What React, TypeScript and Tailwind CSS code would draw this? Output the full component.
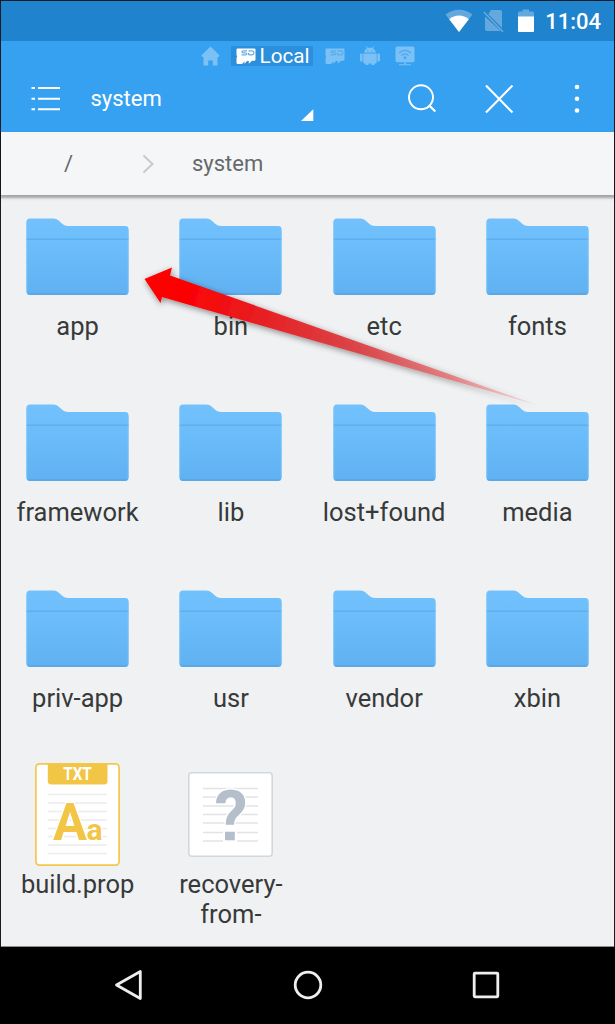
import type { ReactNode } from "react";

function Folder() {
  return (
    <svg width="103" height="78" viewBox="0 0 103 78">
      <defs>
        <linearGradient id="folderFill" x1="0" y1="0" x2="0" y2="1">
          <stop offset="0" stopColor="#72c1fd" />
          <stop offset="0.28" stopColor="#6dbefb" />
          <stop offset="1" stopColor="#60b1f1" />
        </linearGradient>
      </defs>
      <path
        d="M0.4 4Q0.4 0.5 4 0.5H27.500Q30.500 0.500 32.500 2.500L36.500 6Q38.500 8.100 42 8.100H99Q102.600 8.100 102.600 11.500V73.500Q102.600 77 99 77H4Q0.400 77 0.400 73.500Z"
        fill="url(#folderFill)"
      />
      <path d="M0.500 21.200H102.500" stroke="#5db0ed" strokeWidth="1.500" />
      <path d="M2.500 76H100.500" stroke="#559fd9" strokeWidth="1.200" />
      <path d="M0.800 4V74M102.200 12V74" stroke="#83c8fb" strokeWidth="0.700" />
    </svg>
  );
}

function TextFile() {
  return (
    <svg width="85" height="103" viewBox="0 0 85 103">
      <rect x="0.900" y="0.900" width="83.200" height="101.200" rx="3.500" fill="#fff" stroke="#f3c74e" strokeWidth="1.700" />
      <path d="M13 31.500H72M13 40H72M13 48.500H72M13 57H72M13 65.500H72M13 73.500H72M13 82H72M13 90.500H72" stroke="#ebecee" strokeWidth="1.400" />
      <path d="M12.800 1H72.500V18Q72.500 21.500 69 21.500H16.300Q12.800 21.500 12.800 18Z" fill="#f3c546" />
      <text x="42.500" y="17.300" textAnchor="middle" fontFamily="Roboto, sans-serif" fontWeight="700" fontSize="17.500" textLength="28.500" lengthAdjust="spacingAndGlyphs" fill="#fff">TXT</text>
      <g fontFamily="Roboto, sans-serif" fontWeight="700" fill="#f3c546" stroke="#fff" strokeWidth="3" paintOrder="stroke">
        <text x="18" y="76.500" fontSize="52" textLength="34" lengthAdjust="spacingAndGlyphs">A</text>
        <text x="51.500" y="76.500" fontSize="30">a</text>
      </g>
    </svg>
  );
}

function UnknownFile() {
  return (
    <svg width="85" height="85" viewBox="0 0 85 85">
      <rect x="0.800" y="0.800" width="83.400" height="83.400" rx="3" fill="#fff" stroke="#d3d8df" strokeWidth="1.600" />
      <path d="M15 16.500H70M15 25H70M15 34H70M15 42.500H70M15 51H70M15 60.500H70M15 69H70" stroke="#e2e3e5" strokeWidth="1.500" />
      <text x="26.500" y="67.500" fontFamily="Roboto, sans-serif" fontWeight="700" fontSize="71" textLength="33" lengthAdjust="spacingAndGlyphs" fill="#b5bfcc" stroke="#fff" strokeWidth="3" paintOrder="stroke">?</text>
      <path d="M35 57.500H49V70H35Z" fill="#fff" />
      <path d="M37 59.700H46.800V68.300H37Z" fill="#b5bfcc" />
    </svg>
  );
}

function SdCard({ cutout }: { cutout: string }) {
  return (
    <svg width="20" height="17" viewBox="0 0 20 17">
      <path d="M1.500 0.500H18.500Q19.500 0.500 19.500 1.500V11.500Q19.500 12.800 18.200 12.800H16L12.800 15.800V13H11L8.500 16V13.500L6 16H1.800Q0.500 16 0.500 14.800V10L1.200 8.500L0.500 7V1.500Q0.500 0.500 1.500 0.500Z" fill="currentColor" />
      <path d="M11 2.900H7.300Q5.800 2.900 5.800 3.900T7.300 4.900H9.500Q11 4.900 11 5.900T9.500 6.900H5.500M12.500 2.900H16Q18 2.900 18 4.900T16 6.900H12.700V5" fill="none" stroke={cutout} strokeWidth="1" />
    </svg>
  );
}

function StatusBar() {
  return (
    <div className="flex h-10 shrink-0 items-center justify-end bg-[#2083cd] pr-[13px]">
      <svg className="mr-[10px]" width="28" height="24" viewBox="0 0 28 24">
        <path d="M0.500 5.500C8.500 -0.800 19.500 -0.800 27.500 5.500L14 23Z" fill="#64a9dd" />
        <path d="M4.200 10.300C10 5.300 18 5.300 23.800 10.300L14 23Z" fill="#fff" />
      </svg>
      <svg className="mr-[14px]" width="21" height="24" viewBox="0 0 21 24">
        <path d="M8 1H17Q19 1 19 3V19L5.300 5.200ZM2.500 8L17.500 22H4Q2 22 2 20V8Z" fill="#64a9dd" />
        <path d="M0.800 3L20 22.800" stroke="#64a9dd" strokeWidth="1.700" />
      </svg>
      <svg className="mr-[11px]" width="16" height="24" viewBox="0 0 16 24">
        <path d="M0 4Q0 2.500 1.500 2.500H4.500V0.500H11V2.500H14.500Q16 2.500 16 4V8H0Z" fill="#64a9dd" />
        <path d="M0 7.500H16V22Q16 23 15 23H1Q0 23 0 22Z" fill="#fff" />
      </svg>
      <span className="pt-[2px] text-[22px] leading-[26px] font-medium text-white">11:04</span>
    </div>
  );
}

function StorageTabs() {
  return (
    <div className="flex h-5 items-center pl-[200px] text-[#7bc1f6]">
      <svg width="19" height="20" viewBox="0 0 19 20">
        <path d="M9.500 0.500L18.700 9.500L17.500 11H16.500V19.500H11.800V14.500H7.200V19.500H2.500V11H1.500L0.300 9.500Z" fill="currentColor" />
      </svg>
      <div className="ml-[11px] flex h-5 w-[82px] items-center bg-[#2b8fdb] pl-[5px] text-white">
        <SdCard cutout="#3897de" />
        <span className="ml-[3.500px] text-[20.700px] leading-5">Local</span>
      </div>
      <div className="ml-[12px] flex items-center gap-[15px]">
        <SdCard cutout="#4ea9ec" />
        <svg width="20" height="20" viewBox="0 0 20 20" fill="currentColor">
          <path d="M4 6.500Q4.500 3.500 7 2.200L6 0.700L6.700 0.300L7.900 1.900Q10 1.200 12.100 1.900L13.300 0.300L14 0.700L13 2.200Q15.500 3.500 16 6.500ZM3.300 7.500H16.700V16.500Q16.700 17.500 15.700 17.500H14.500V19H11.500V17.500H8.500V19H5.500V17.500H4.300Q3.300 17.500 3.300 16.500Z" />
          <rect x="0" y="7.500" width="2.600" height="8" rx="1.100" />
          <rect x="17.400" y="7.500" width="2.600" height="8" rx="1.100" />
          <path d="M7.300 4.500h.9M11.800 4.500h.9" stroke="#36a1f1" strokeWidth="1" />
        </svg>
        <svg width="20" height="20" viewBox="0 0 20 20">
          <path d="M2 0.500H18Q19.500 0.500 19.500 2V15Q19.500 16.300 18 16.300H10.700V18.200H16V19.300H4V18.200H9.300V16.300H2Q0.500 16.300 0.500 15V2Q0.500 0.500 2 0.500Z" fill="currentColor" />
          <path d="M4.200 7Q10 1.700 15.800 7M6.500 9.500Q10 6.300 13.500 9.500" fill="none" stroke="#45a7f2" strokeWidth="1.300" />
          <circle cx="10" cy="11.700" r="1.500" fill="#45a7f2" />
        </svg>
      </div>
    </div>
  );
}

function Toolbar() {
  return (
    <div className="flex h-[66px] items-center pl-[30px] text-white">
      <svg width="29" height="26" viewBox="0 0 29 26">
        <path d="M0.500 2H4M0.500 12.700H4M0.500 23.300H4M7 2H29M7 12.700H29M7 23.300H29" stroke="currentColor" strokeWidth="2" />
      </svg>
      <span className="ml-[30.500px] w-[209.500px] text-[22px] leading-[26px]">system</span>
      <svg className="mt-[32px]" width="14" height="13" viewBox="0 0 14 13">
        <path d="M1 12L13.300 0.200V12Z" fill="currentColor" />
      </svg>
      <svg className="ml-[93px]" width="30" height="30" viewBox="0 0 30 30" fill="none" stroke="currentColor">
        <circle cx="14" cy="13.300" r="12" strokeWidth="1.900" />
        <path d="M22 21.300L28.300 27.500" strokeWidth="2.200" />
      </svg>
      <svg className="ml-[48px]" width="29" height="29" viewBox="0 0 29 29">
        <path d="M1 0.500L27.500 27.500M27.500 0.500L1 27.500" fill="none" stroke="currentColor" strokeWidth="2.100" />
      </svg>
      <svg className="ml-[59px]" width="8" height="30" viewBox="0 0 8 30" fill="currentColor">
        <circle cx="4" cy="3" r="2.300" />
        <circle cx="4" cy="14.800" r="2.300" />
        <circle cx="4" cy="26.500" r="2.300" />
      </svg>
    </div>
  );
}

function Breadcrumbs() {
  return (
    <nav className="relative z-10 flex h-[63px] shrink-0 items-center bg-[#f5f6f8] text-[22px] leading-[26px] text-[#66686a] shadow-[0_2px_2px_1px_rgba(0,0,0,0.26),0_3px_5px_rgba(0,0,0,0.08)]">
      <span className="w-[141px] pl-[63px]">/</span>
      <svg width="12" height="20" viewBox="0 0 12 20">
        <path d="M1.500 1.500L10.500 10L1.500 18.500" fill="none" stroke="#c8c9cb" strokeWidth="2" />
      </svg>
      <span className="ml-[38px]">system</span>
    </nav>
  );
}

const folders = [
  "app", "bin", "etc", "fonts",
  "framework", "lib", "lost+found", "media",
  "priv-app", "usr", "vendor", "xbin",
];

function Item({ icon, children }: { icon: ReactNode; children: ReactNode }) {
  return (
    <div className="flex flex-col items-center">
      <div className="flex h-[103px] items-center">{icon}</div>
      <div className="mt-[3px] text-center text-[25.500px] leading-[30px] whitespace-nowrap text-[#373a39]">{children}</div>
    </div>
  );
}

function PointerArrow() {
  return (
    <svg className="pointer-events-none absolute top-[255px] left-[135px] z-20" width="415" height="165" viewBox="135 255 415 165">
      <defs>
        <linearGradient id="arrowFill" gradientUnits="userSpaceOnUse" x1="145" y1="279" x2="536" y2="405">
          <stop offset="0" stopColor="#ff0000" />
          <stop offset="0.110" stopColor="#fb0305" />
          <stop offset="0.300" stopColor="#e71d20" stopOpacity="0.980" />
          <stop offset="0.550" stopColor="#dc3e41" stopOpacity="0.920" />
          <stop offset="0.780" stopColor="#e26467" stopOpacity="0.750" />
          <stop offset="1" stopColor="#ee8c8e" stopOpacity="0.250" />
        </linearGradient>
        <filter id="arrowShadow" x="-10%" y="-20%" width="120%" height="150%">
          <feDropShadow dx="1" dy="2" stdDeviation="3.200" floodColor="#000" floodOpacity="0.450" />
        </filter>
      </defs>
      <path d="M144.500 279L172 267.500L170 275.500L537 405L162 297L160.500 303Z" fill="url(#arrowFill)" filter="url(#arrowShadow)" />
    </svg>
  );
}

function NavigationBar() {
  return (
    <div className="flex h-[77px] shrink-0 items-center justify-between bg-black pr-[115px] pb-[2px] pl-[114px]">
      <svg width="29" height="32" viewBox="0 0 29 32">
        <path d="M26.300 2.500V29.500L2.500 16Z" fill="none" stroke="#eee" strokeWidth="2.800" strokeLinejoin="round" />
      </svg>
      <svg width="30" height="30" viewBox="0 0 30 30">
        <circle cx="15" cy="15" r="12.800" fill="none" stroke="#eee" strokeWidth="2.800" />
      </svg>
      <svg width="28" height="28" viewBox="0 0 28 28">
        <rect x="2.200" y="2.200" width="23.600" height="23.600" rx="0.700" fill="none" stroke="#eee" strokeWidth="2.800" />
      </svg>
    </div>
  );
}

export default function App() {
  return (
    <div className="relative flex h-[1024px] w-[615px] flex-col overflow-hidden bg-[#171c22] font-[Roboto,sans-serif]">
      <div className="mx-px mt-px flex min-h-0 flex-1 flex-col">
        <StatusBar />
        <header className="h-[91px] shrink-0 bg-[#36a1f1] pt-[5px]">
          <StorageTabs />
          <Toolbar />
        </header>
        <Breadcrumbs />
        <main className="grid min-h-0 flex-1 auto-rows-[186px] grid-cols-4 overflow-hidden border-b border-[#8c8f8e] bg-[#f0f1f3] pt-[10px]">
          {folders.map((name) => (
            <Item key={name} icon={<Folder />}>{name}</Item>
          ))}
          <Item icon={<TextFile />}>build.prop</Item>
          <Item icon={<UnknownFile />}>recovery-<br />from-</Item>
        </main>
      </div>
      <NavigationBar />
      <PointerArrow />
    </div>
  );
}
